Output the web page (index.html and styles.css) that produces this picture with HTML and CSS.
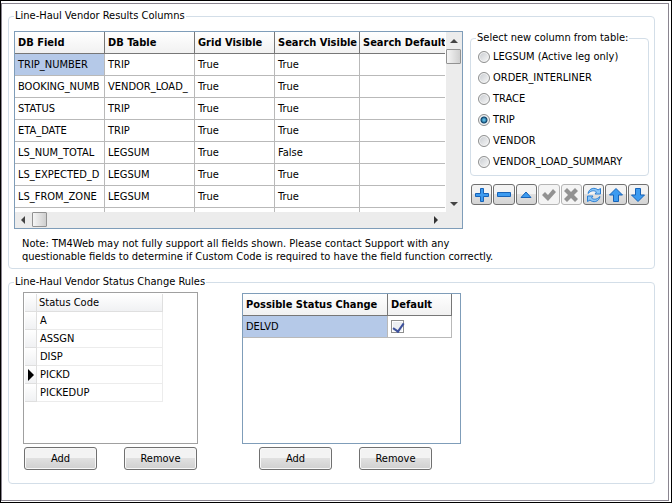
FILE: index.html
```
<!DOCTYPE html>
<html lang="en">
<head>
    <meta charset="UTF-8">
    <title>Line-Haul Vendor Columns</title>
    <meta name="viewport" content="width=device-width, initial-scale=1">
    <link rel="stylesheet" href="styles.css">
</head>
<body>
<main class="frame">
    <fieldset class="group">
        <legend>Line-Haul Vendor Results Columns</legend>
        <div class="results">
            <div class="grid">
                <div class="grid-view">
                    <table class="columns-table">
                        <colgroup>
                            <col class="col-field"><col class="col-table"><col class="col-grid"><col class="col-search"><col>
                        </colgroup>
                        <thead>
                            <tr><th>DB Field</th><th>DB Table</th><th>Grid Visible</th><th>Search Visible</th><th>Search Default</th></tr>
                        </thead>
                        <tbody>
                            <tr><td class="selected">TRIP_NUMBER</td><td>TRIP</td><td>True</td><td>True</td><td></td></tr>
                            <tr><td>BOOKING_NUMB</td><td>VENDOR_LOAD_</td><td>True</td><td>True</td><td></td></tr>
                            <tr><td>STATUS</td><td>TRIP</td><td>True</td><td>True</td><td></td></tr>
                            <tr><td>ETA_DATE</td><td>TRIP</td><td>True</td><td>True</td><td></td></tr>
                            <tr><td>LS_NUM_TOTAL</td><td>LEGSUM</td><td>True</td><td>False</td><td></td></tr>
                            <tr><td>LS_EXPECTED_D</td><td>LEGSUM</td><td>True</td><td>True</td><td></td></tr>
                            <tr><td>LS_FROM_ZONE</td><td>LEGSUM</td><td>True</td><td>True</td><td></td></tr>
                            <tr><td></td><td></td><td></td><td></td><td></td></tr>
                        </tbody>
                    </table>
                </div>
                <div class="scroll scroll-v">
                    <svg width="16" height="17" viewBox="0 0 16 17"><path d="M4 11l4-4 4 4z" fill="#444"/></svg>
                    <span class="thumb"></span>
                    <svg class="scroll-end" width="16" height="17" viewBox="0 0 16 17"><path d="M4 7h8l-4 4z" fill="#444"/></svg>
                </div>
                <div class="scroll scroll-h">
                    <svg width="17" height="16" viewBox="0 0 17 16"><path d="M10 4v8L6 8z" fill="#444"/></svg>
                    <span class="thumb"></span>
                    <svg class="scroll-end" width="17" height="16" viewBox="0 0 17 16"><path d="M6 4v8l4-4z" fill="#333"/></svg>
                </div>
            </div>
            <div class="picker">
                <fieldset class="group sources">
                    <legend>Select new column from table:</legend>
                    <label><input type="radio" name="source">LEGSUM (Active leg only)</label>
                    <label><input type="radio" name="source">ORDER_INTERLINER</label>
                    <label><input type="radio" name="source">TRACE</label>
                    <label><input type="radio" name="source" checked>TRIP</label>
                    <label><input type="radio" name="source">VENDOR</label>
                    <label><input type="radio" name="source">VENDOR_LOAD_SUMMARY</label>
                </fieldset>
                <div class="toolbar">
                    <button type="button" aria-label="Insert"><svg viewBox="0 0 16 16"><path d="M6.500 1.500h3v5h5v3h-5v5h-3v-5h-5v-3h5z"/></svg></button>
                    <button type="button" aria-label="Delete"><svg viewBox="0 0 16 16"><path d="M1.500 5.500h13v4h-13z"/></svg></button>
                    <button type="button" aria-label="Edit"><svg viewBox="0 0 16 16"><path d="M3 10.500L8 5l5 5.500z"/></svg></button>
                    <button type="button" aria-label="Post" disabled><svg viewBox="0 0 16 16"><path d="M1 8l3-3 3 3L12 2l3 3-8 9z"/></svg></button>
                    <button type="button" aria-label="Cancel" disabled><svg viewBox="0 0 16 16"><path d="M1 4l3-3 4 4 4-4 3 3-4 4 4 4-3 3-4-4-4 4-3-3 4-4z"/></svg></button>
                    <button type="button" aria-label="Refresh"><svg class="refresh" viewBox="0 0 16 16"><path d="M2 6.500C3 1 9 0 12 3l2.500-1.500v5.500H9l1.500-2C8 3 5 3.500 2 6.500z"/><path d="M14 9.500C13 15 7 16 4 13l-2.500 1.500V9H7l-1.500 2C8 13 11 12.500 14 9.500z"/></svg></button>
                    <button type="button" aria-label="Move up"><svg viewBox="0 0 16 16"><path d="M8 1.500L14.500 8h-4v6.500h-5V8h-4z"/></svg></button>
                    <button type="button" aria-label="Move down"><svg viewBox="0 0 16 16"><path d="M8 14.500L1.500 8h4V1.500h5V8h4z"/></svg></button>
                </div>
            </div>
        </div>
        <p class="note">Note: TM4Web may not fully support all fields shown. Please contact Support with any<br>questionable fields to determine if Custom Code is required to have the field function correctly.</p>
    </fieldset>

    <fieldset class="group rules">
        <legend>Line-Haul Vendor Status Change Rules</legend>
        <div class="rule-panels">
            <div class="codes">
                <div class="code-box">
                    <table class="code-table">
                        <thead>
                            <tr><th class="mark"></th><th>Status Code</th></tr>
                        </thead>
                        <tbody>
                            <tr><td class="mark"></td><td>A</td></tr>
                            <tr><td class="mark"></td><td>ASSGN</td></tr>
                            <tr><td class="mark"></td><td>DISP</td></tr>
                            <tr><td class="mark"><svg width="6" height="12" viewBox="0 0 6 12"><path d="M0 0v12l6-6z"/></svg></td><td>PICKD</td></tr>
                            <tr><td class="mark"></td><td>PICKEDUP</td></tr>
                        </tbody>
                    </table>
                </div>
                <div class="actions">
                    <button type="button">Add</button>
                    <button type="button">Remove</button>
                </div>
            </div>
            <div class="changes">
                <div class="change-box">
                    <table class="columns-table change-table">
                        <colgroup><col class="col-change"><col class="col-default"></colgroup>
                        <thead>
                            <tr><th>Possible Status Change</th><th>Default</th></tr>
                        </thead>
                        <tbody>
                            <tr><td class="selected">DELVD</td><td><input type="checkbox" aria-label="Default" checked></td></tr>
                        </tbody>
                    </table>
                </div>
                <div class="actions">
                    <button type="button">Add</button>
                    <button type="button">Remove</button>
                </div>
            </div>
        </div>
    </fieldset>
</main>
</body>
</html>
```
FILE: styles.css
```
* {
    box-sizing: border-box;
}

body {
    margin: 0;
    min-height: 100vh;
    display: flex;
    padding: 2px 2px 1px 0;
    border: 1px solid #000;
    background: #fff;
    color: #000;
    font: 11px/14px "DejaVu Sans Condensed", Tahoma, sans-serif;
}

.frame {
    flex: 1;
    min-width: 0;
    padding: 5px 13px 0 6px;
    border: 1px solid #8a8590;
}

button {
    font: inherit;
    color: inherit;
}

.group {
    min-width: 0;
    margin: 0;
    padding: 8px 5px 5px 5px;
    border: 1px solid #d3dee8;
    border-radius: 4px;
}
.group legend {
    padding: 0 1px;
}

/* Results grid */
.results {
    display: flex;
    gap: 7px;
}
.grid {
    flex: 1;
    min-width: 0;
    height: 198px;
    display: grid;
    grid-template-columns: 1fr 16px;
    grid-template-rows: 1fr 16px;
    border: 1px solid #7f9db9;
    background: #fff;
}
.grid-view {
    overflow: hidden;
    margin-right: 1px;
}

.columns-table {
    width: 100%;
    table-layout: fixed;
    border-collapse: separate;
    border-spacing: 0;
}
.columns-table th,
.columns-table td {
    height: 22px;
    padding: 0 0 0 3px;
    border-right: 1px solid #b9b9b9;
    border-bottom: 1px solid #b9b9b9;
    text-align: left;
    white-space: nowrap;
    overflow: hidden;
}
.columns-table th {
    border-color: #777;
    background: linear-gradient(#fff, #f1f1f1);
    font-weight: bold;
}
.grid .columns-table th:last-child,
.grid .columns-table td:last-child {
    border-right: none;
}
.columns-table .selected {
    background: #b5c9e8;
}
.col-field,
.col-table {
    width: 90px;
}
.col-grid {
    width: 80px;
}
.col-search {
    width: 85px;
}

.scroll {
    display: flex;
    background: #ececec;
}
.scroll-v {
    flex-direction: column;
}
.scroll-h {
    padding-right: 1px;
}
.scroll-end {
    margin-top: auto;
}
.scroll-h .scroll-end {
    margin: 0 0 0 auto;
}
.scroll svg {
    flex: none;
}
.thumb {
    width: 15px;
    height: 15px;
    border: 1px solid #929292;
    border-radius: 1px;
    background: linear-gradient(90deg, #f5f5f5, #cfcfcf);
}
.grid::after {
    content: "";
    background: #ececec;
}

/* Source picker */
.picker {
    width: 179px;
}
.sources {
    padding: 1px 4px 3px 7px;
}
.sources legend {
    margin-left: -2px;
}
.sources label {
    display: flex;
    align-items: center;
    gap: 3px;
    height: 21px;
    white-space: nowrap;
}
input[type="radio"] {
    appearance: none;
    width: 12px;
    height: 12px;
    margin: 0;
    border: 1px solid #8e8f8f;
    border-radius: 50%;
    background: linear-gradient(135deg, #c6cacf, #f8f8f8);
    box-shadow: inset 0 0 0 1px #f4f4f4;
}
input[type="radio"]:checked {
    background: radial-gradient(circle, #58b6e0 0 1px, #0e4269 3px, #e6e9ec 4px);
}

.toolbar {
    display: flex;
    gap: 1px;
    margin: 8px 0 0 1px;
}
.toolbar button {
    flex: 1;
    height: 21px;
    padding: 0;
    display: flex;
    align-items: center;
    justify-content: center;
    border: 1px solid #707070;
    border-radius: 3px;
    background: linear-gradient(#f3f3f3 50%, #e0e0e0 50%, #d4d4d4);
}
.toolbar svg {
    width: 16px;
    height: 16px;
    fill: #3d9bf0;
    stroke: #1763b8;
}
.toolbar .refresh {
    fill: #8cc6f7;
    stroke: #2a7fd4;
}
.toolbar button:disabled {
    border-color: #b5b5b5;
    background: #f4f4f4;
}
.toolbar button:disabled svg {
    fill: #929292;
    stroke: none;
}

.note {
    margin: 8px 0 0 8px;
    line-height: 13px;
}

/* Status change rules */
.rules {
    margin-top: 6px;
    padding: 3px 5px 13px 14px;
}
.rules > legend {
    margin-left: -9px;
}
.rule-panels {
    display: flex;
    gap: 44px;
}
.code-box {
    width: 175px;
    height: 152px;
    padding: 1px;
    border: 1px solid #a0a0a0;
}
.code-table {
    width: 138px;
    border-collapse: separate;
    border-spacing: 0;
}
.code-table th,
.code-table td {
    height: 18px;
    padding: 0 0 0 3px;
    border-right: 1px solid #ececec;
    border-bottom: 1px solid #ececec;
    text-align: left;
    font-weight: normal;
}
.code-table th {
    padding-left: 2px;
    border-color: #dfdfdf;
    background: linear-gradient(#fff, #f0f1f3);
}
.code-table .mark {
    width: 12px;
    padding: 0 0 0 3px;
    border-color: #dfdfdf;
    background: linear-gradient(#fff, #f0f1f3);
}
.code-table svg {
    display: block;
}

.change-box {
    width: 219px;
    height: 151px;
    margin-top: 1px;
    border: 1px solid #7f9db9;
}
.change-table {
    width: 209px;
}
.col-change {
    width: 145px;
}
.col-default {
    width: 64px;
}
input[type="checkbox"] {
    appearance: none;
    display: block;
    width: 13px;
    height: 13px;
    margin: 0;
    border: 1px solid #8e8f8f;
    background: #eceff3;
    box-shadow: inset 0 0 0 1px #fff;
}
input[type="checkbox"]:checked::before {
    content: "";
    display: block;
    width: 5px;
    height: 9px;
    margin: 0 0 0 3px;
    border: solid #3d519c;
    border-width: 0 2px 2px 0;
    transform: rotate(35deg);
}

.actions {
    display: flex;
    gap: 27px;
    margin: 3px 0 0 1px;
}
.changes .actions {
    margin-left: 17px;
}
.actions button {
    width: 73px;
    height: 23px;
    padding: 0;
    border: 1px solid #707070;
    border-radius: 3px;
    background: linear-gradient(#f3f3f3 50%, #e0e0e0 50%, #d0d0d0);
    box-shadow: inset 0 0 0 1px #f8f8f8;
}
```
